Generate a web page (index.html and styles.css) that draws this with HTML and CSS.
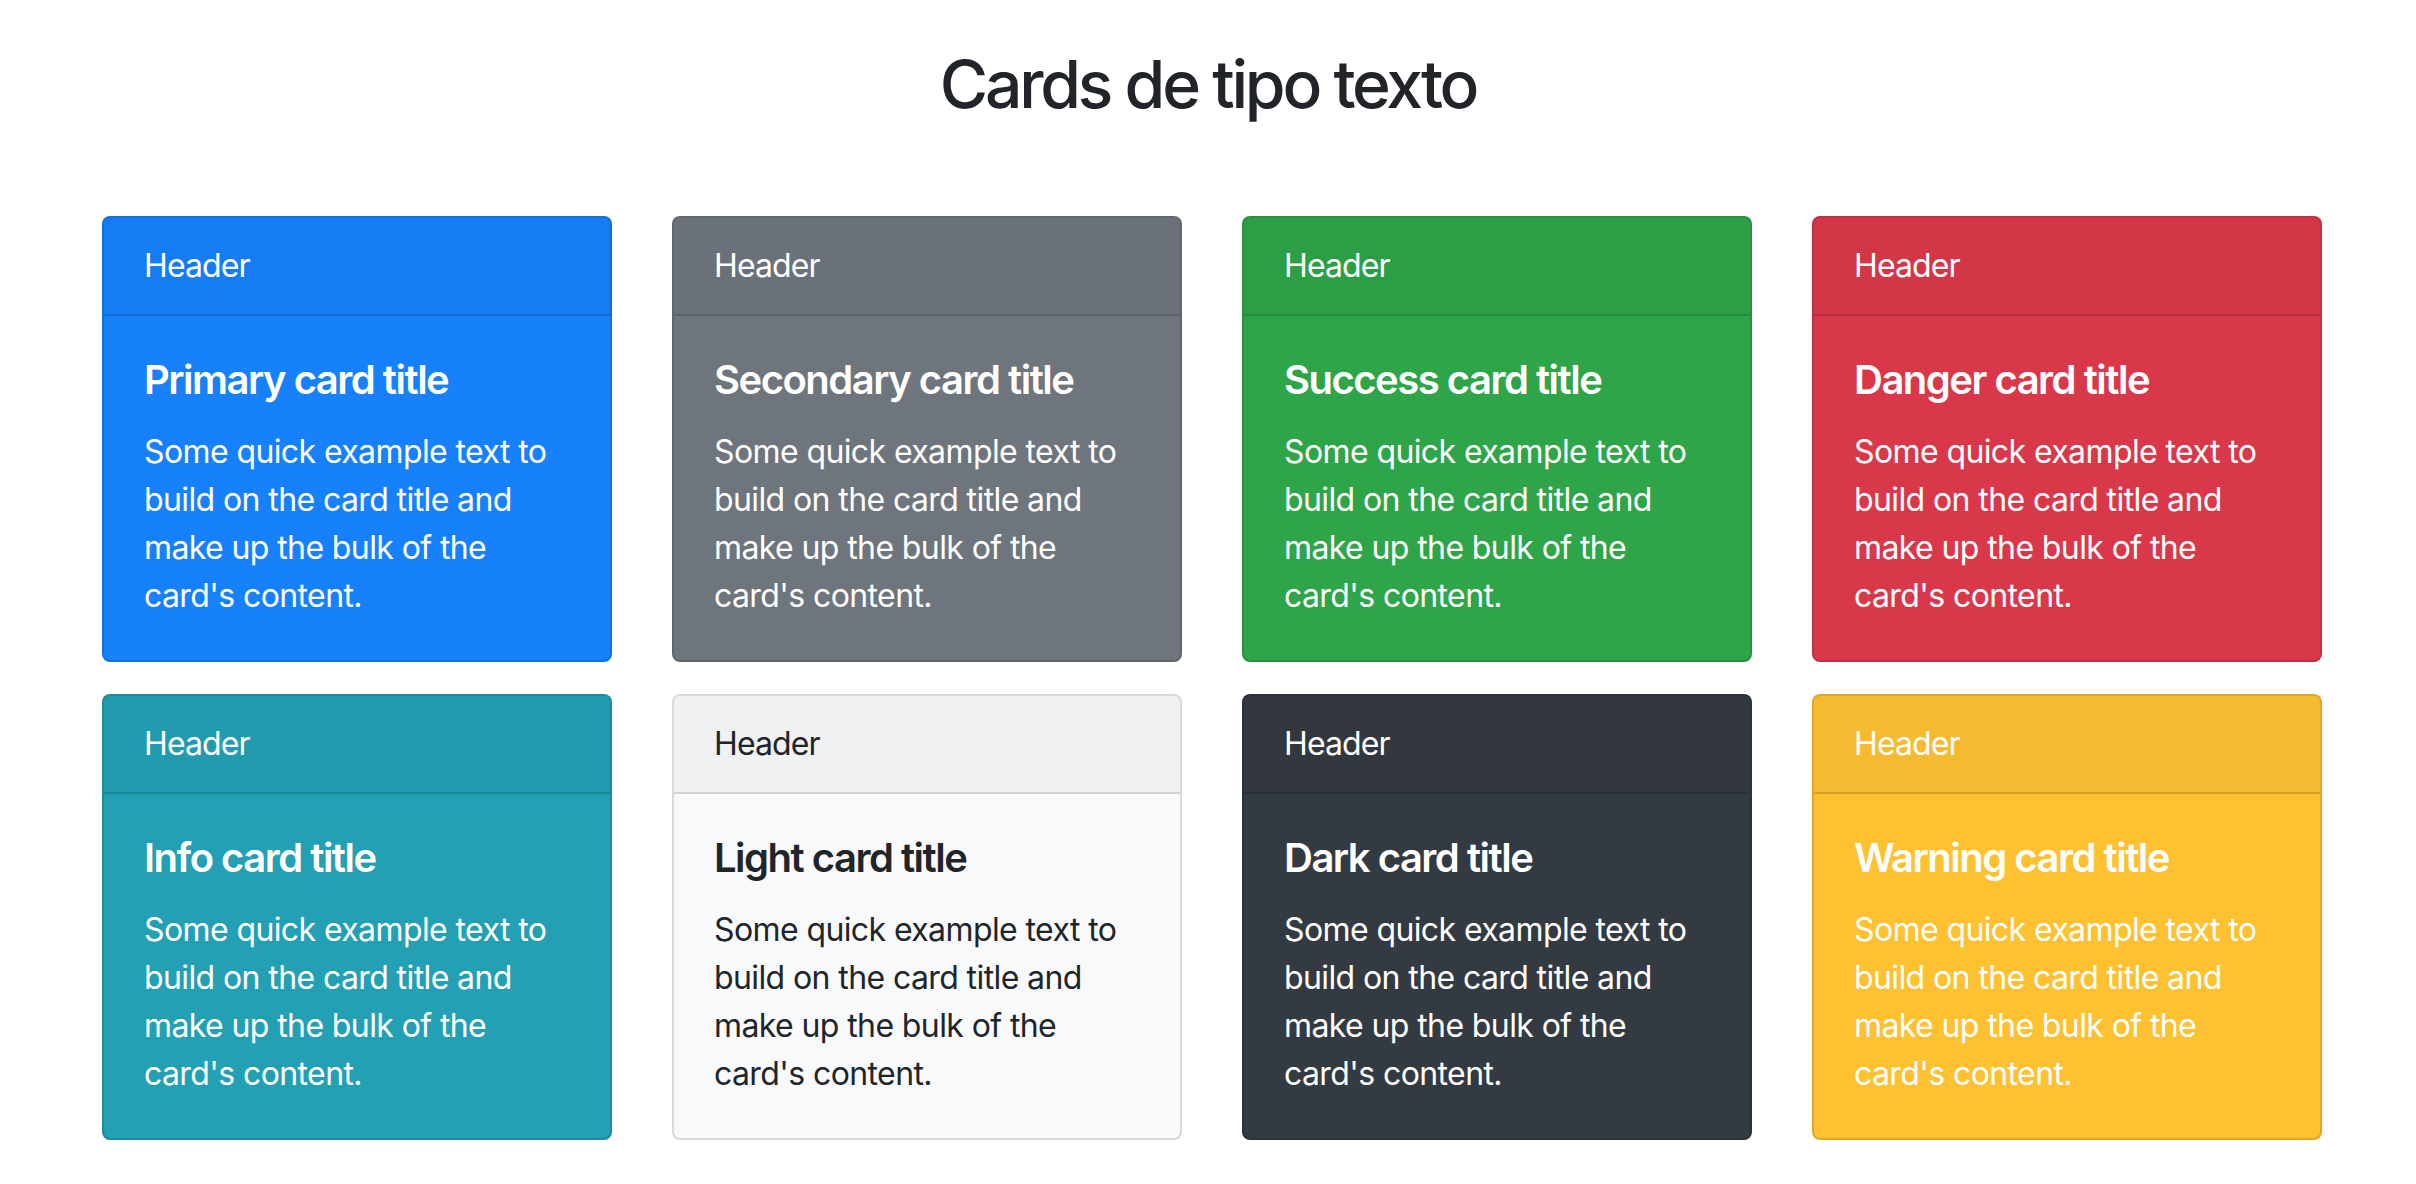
FILE: index.html
```
<!DOCTYPE html>
<html lang="es">
<head>
<meta charset="utf-8">
<title>Cards de tipo texto</title>
<link rel="stylesheet" href="styles.css">
</head>
<body>
<h1 class="page-title">Cards de tipo texto</h1>
<div class="card-grid">
  <div class="card primary">
    <div class="card-header">Header</div>
    <div class="card-body"><h5 class="card-title">Primary card title</h5><p class="card-text">Some quick example text to build on the card title and make up the bulk of the card's content.</p></div>
  </div>
  <div class="card secondary">
    <div class="card-header">Header</div>
    <div class="card-body"><h5 class="card-title">Secondary card title</h5><p class="card-text">Some quick example text to build on the card title and make up the bulk of the card's content.</p></div>
  </div>
  <div class="card success">
    <div class="card-header">Header</div>
    <div class="card-body"><h5 class="card-title">Success card title</h5><p class="card-text">Some quick example text to build on the card title and make up the bulk of the card's content.</p></div>
  </div>
  <div class="card danger">
    <div class="card-header">Header</div>
    <div class="card-body"><h5 class="card-title">Danger card title</h5><p class="card-text">Some quick example text to build on the card title and make up the bulk of the card's content.</p></div>
  </div>
  <div class="card info">
    <div class="card-header">Header</div>
    <div class="card-body"><h5 class="card-title">Info card title</h5><p class="card-text">Some quick example text to build on the card title and make up the bulk of the card's content.</p></div>
  </div>
  <div class="card light">
    <div class="card-header">Header</div>
    <div class="card-body"><h5 class="card-title">Light card title</h5><p class="card-text">Some quick example text to build on the card title and make up the bulk of the card's content.</p></div>
  </div>
  <div class="card dark">
    <div class="card-header">Header</div>
    <div class="card-body"><h5 class="card-title">Dark card title</h5><p class="card-text">Some quick example text to build on the card title and make up the bulk of the card's content.</p></div>
  </div>
  <div class="card warning">
    <div class="card-header">Header</div>
    <div class="card-body"><h5 class="card-title">Warning card title</h5><p class="card-text">Some quick example text to build on the card title and make up the bulk of the card's content.</p></div>
  </div>
</div>
</body>
</html>
```
FILE: styles.css
```
html, body {
  margin: 0;
  padding: 0;
  background: #ffffff;
}
body {
  font-family: Inter, "Noto Sans", "Liberation Sans", sans-serif;
  font-size: 32px;
  line-height: 48px;
  color: #212529;
  letter-spacing: -0.6px;
}
.page-title {
  margin: 0;
  padding-top: 44px;
  height: 178px;
  box-sizing: border-box;
  text-align: center;
  font-size: 66px;
  line-height: 80px;
  font-weight: 500;
  letter-spacing: -3.2px;
  color: #212529;
}
.card-grid {
  display: grid;
  grid-template-columns: repeat(4, 510px);
  column-gap: 60px;
  row-gap: 32px;
  padding: 38px 0 0 102px;
}
.card {
  display: flex;
  flex-direction: column;
  border: 2px solid rgba(0, 0, 0, 0.125);
  border-radius: 8px;
  color: #ffffff;
  overflow: hidden;
}
.card-header {
  padding: 24px 40px;
  background: rgba(0, 0, 0, 0.03);
  border-bottom: 2px solid rgba(0, 0, 0, 0.125);
  line-height: 48px;
  letter-spacing: -0.9px;
}
.card-body {
  padding: 40px;
}
.card-title {
  margin: 0 0 24px 0;
  font-size: 40px;
  line-height: 48px;
  font-weight: 600;
  letter-spacing: -1.5px;
}
.card-text {
  margin: 0;
}
.primary { background: #1780fb; }
.secondary { background: #6e757c; }
.success { background: #2ea549; }
.danger { background: #d9384a; }
.info { background: #24a0b5; }
.light { background: #f8f9fa; color: #212529; }
.dark { background: #343a41; }
.warning { background: #fdc131; }
```
